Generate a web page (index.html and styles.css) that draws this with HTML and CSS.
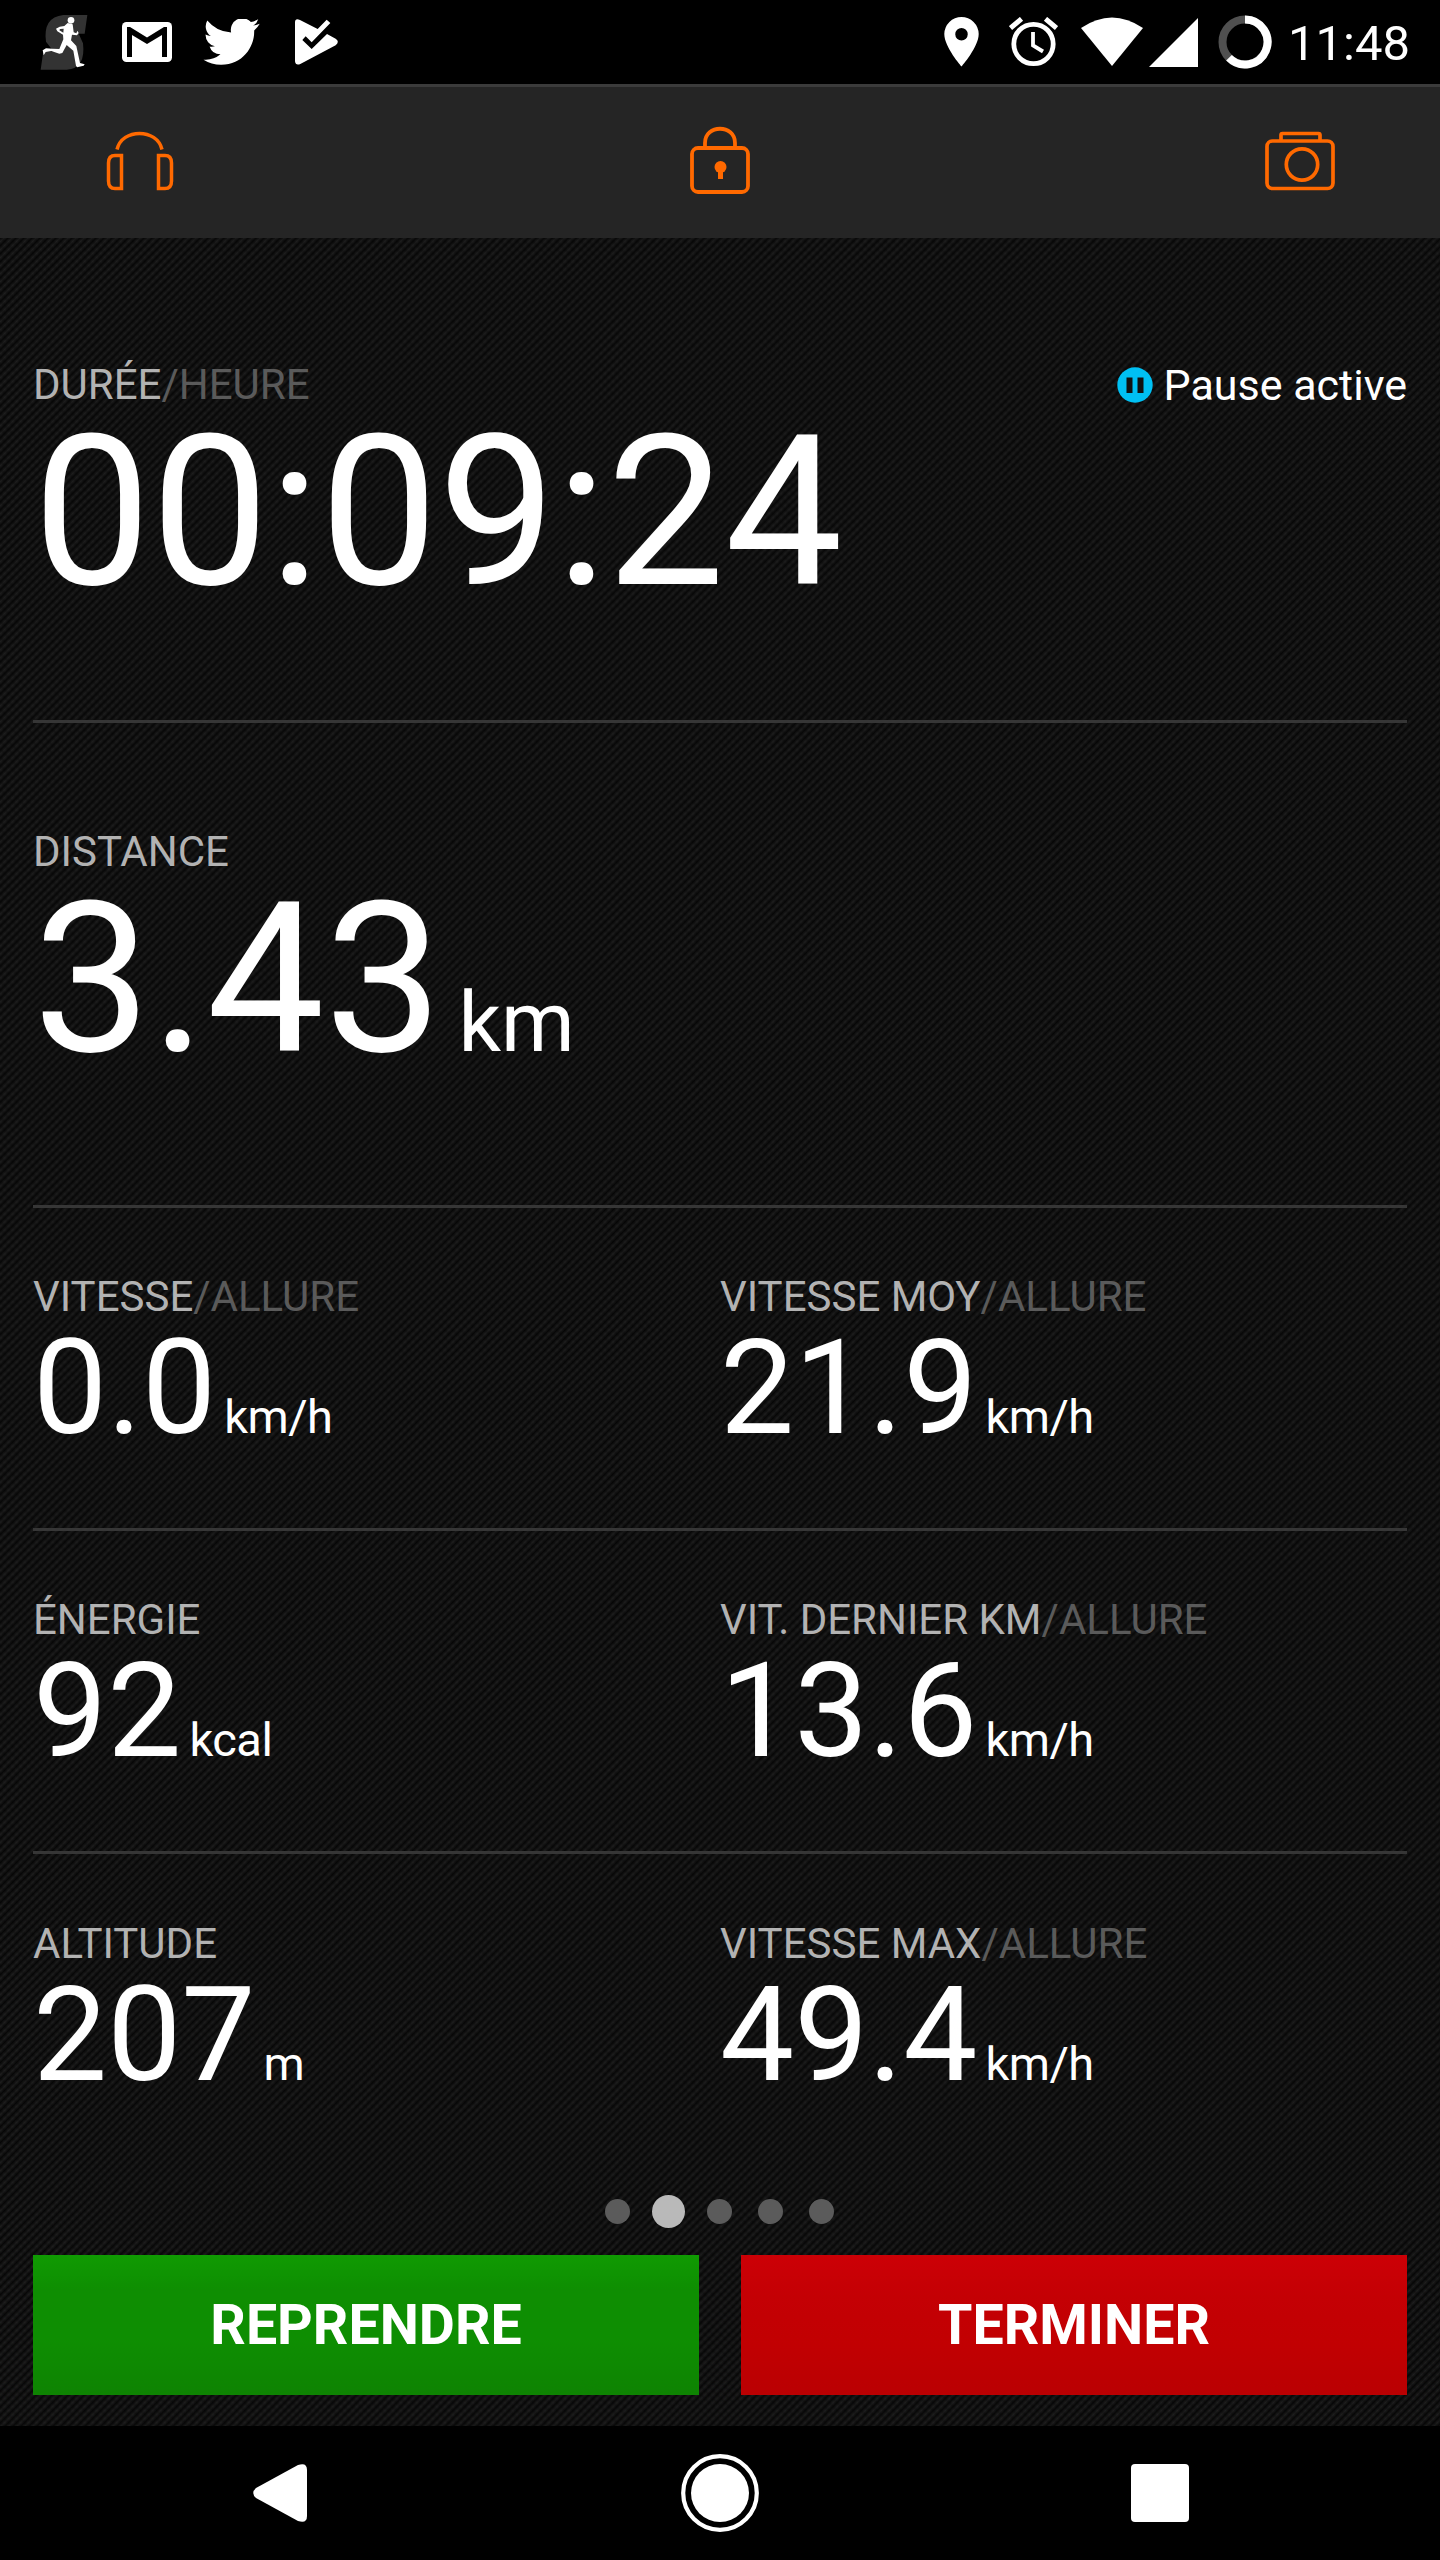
FILE: index.html
```html
<!DOCTYPE html>
<html lang="fr">
<head>
    <meta charset="UTF-8">
    <meta name="viewport" content="width=device-width, initial-scale=1.0">
    <title>Suivi de séance</title>
    <link rel="stylesheet" href="styles.css">
</head>
<body>

    <header class="status-bar">
        <div class="notifications">
            <svg class="runner" width="48" height="56" viewBox="120 42 144 168">
                <path fill="#333" d="M190 45H262L254 101H236L249 130Q258 206 200 209H122L130 154H160L138 125Q128 52 190 45Z"/>
                <circle cx="213" cy="61" r="10" fill="#fff"/>
                <path fill="#fff" d="M203 69L218 73L221 97L229 100L232 92L236 99L231 106L216 104L213 121L229 138L240 189L254 193L251 197L231 202L228 197L220 152L200 135L187 159L178 161L154 153L137 156L131 166L128 151L138 145L157 146L178 147L190 118L189 104L172 94L168 86L179 80L193 78ZM180 87L178 91L190 98L191 86Z"/>
            </svg>
            <svg class="mail" width="50" height="40" viewBox="0 0 50 40">
                <rect width="50" height="40" rx="4.500" fill="#fff"/>
                <path fill="#000" d="M5 5H8L25 15.500L42 5H45V35H40V13L25 22L10 13V35H5Z"/>
            </svg>
            <svg class="bird" width="57" height="47" viewBox="1 3 22.500 18.500" preserveAspectRatio="none">
                <path fill="#fff" d="M23.4 4.900a9 9 0 0 1-2.600.7 4.500 4.500 0 0 0 2-2.500 9 9 0 0 1-2.900 1.100A4.550 4.550 0 0 0 12.100 8.300 12.900 12.900 0 0 1 2.700 3.600a4.550 4.550 0 0 0 1.400 6.100 4.500 4.500 0 0 1-2.100-.6v.1a4.550 4.550 0 0 0 3.700 4.500 4.600 4.600 0 0 1-2.100.1 4.550 4.550 0 0 0 4.300 3.100A9.100 9.100 0 0 1 1.200 19a12.900 12.900 0 0 0 7 2c8.400 0 13-6.900 13-12.900v-.6a9.200 9.200 0 0 0 2.200-2.600z"/>
            </svg>
            <svg class="play" width="43" height="46" viewBox="885 57 129 138">
                <path fill="#fff" d="M885 66Q886 53 900 60L953 87L980 59L991 69L935 127L917 109L907 120L935 147L981 102L1007 116Q1020 125 1007 136L901 192Q887 198 885 184Z"/>
            </svg>
        </div>
        <div class="indicators">
            <svg class="pin" width="35" height="50" viewBox="0 0 35 50">
                <path fill="#fff" fill-rule="evenodd" d="M17.500 0A17.200 17.200 0 0 0 .3 17C.3 30 17.500 49.500 17.500 49.500S34.700 30 34.700 17A17.200 17.200 0 0 0 17.500 0ZM17.500 11A6.200 6.200 0 1 1 17.500 23.500A6.200 6.200 0 1 1 17.500 11Z"/>
            </svg>
            <svg class="alarm" width="49" height="50" viewBox="0 0 49 50">
                <circle cx="24.500" cy="27" r="19.700" fill="none" stroke="#fff" stroke-width="4.800"/>
                <path d="M1.500 11L12.500 1.800M36.500 1.800L47.500 11" stroke="#fff" stroke-width="5"/>
                <path d="M24 15V28.500L34 34.500" fill="none" stroke="#fff" stroke-width="3.800"/>
            </svg>
            <svg class="wifi" width="62" height="50" viewBox="0 0 62 50">
                <path fill="#fff" d="M0 11Q31 -10 62 11L31 49Z"/>
            </svg>
            <svg class="signal" width="49" height="49" viewBox="0 0 49 49">
                <path fill="#fff" d="M49 0V49H0Z"/>
            </svg>
            <svg class="battery" width="54" height="54" viewBox="0 0 54 54">
                <circle cx="27" cy="27" r="22.500" fill="none" stroke="#505050" stroke-width="8"/>
                <path d="M27 4.500A22.500 22.500 0 1 1 11 42.800" fill="none" stroke="#fff" stroke-width="8"/>
            </svg>
            <span class="clock">11:48</span>
        </div>
    </header>

    <nav class="toolbar">
        <svg width="70" height="70" viewBox="105 127 70 70">
            <g fill="none" stroke="#ff6900" stroke-width="3.500">
                <path d="M117 149.500C122 128 157 128 162 149.500"/>
                <path d="M121.500 155.500V188.500H115Q108.500 188.500 108.500 181V163Q108.500 155.500 115 155.500Z"/>
                <path d="M158.500 155.500V188.500H165Q171.500 188.500 171.500 181V163Q171.500 155.500 165 155.500Z"/>
            </g>
        </svg>
        <svg width="70" height="70" viewBox="685 127 70 70">
            <g fill="none" stroke="#ff6900" stroke-width="3.800">
                <rect x="692" y="148" width="56" height="44" rx="6"/>
                <path d="M705 147V143C705 124 735 124 735 143V147"/>
            </g>
            <circle cx="720.500" cy="167" r="6" fill="#ff6900"/>
            <path d="M718 169H723V179H718Z" fill="#ff6900"/>
        </svg>
        <svg width="70" height="70" viewBox="1265 127 70 70">
            <g fill="none" stroke="#ff6900" stroke-width="3.700">
                <rect x="1267" y="141" width="66" height="47.500" rx="5.500"/>
                <path d="M1281 141V135Q1281 133.500 1282.500 133.500H1318.500Q1320 133.500 1320 135V141"/>
                <circle cx="1302" cy="164.500" r="15.700"/>
            </g>
        </svg>
    </nav>

    <main class="dashboard">
        <section class="panel panel-duration">
            <div class="metric metric-large">
                <h2>DURÉE<span>/HEURE</span></h2>
                <p>00:09:24</p>
            </div>
            <div class="pause">
                <svg width="36" height="36" viewBox="0 0 36 36">
                    <circle cx="18" cy="18" r="17.700" fill="#00c0f3"/>
                    <path d="M9.500 10.500h6v15.500h-6zM20.500 10.500h6v15.500h-6z" fill="#111"/>
                </svg>
                Pause active
            </div>
        </section>

        <section class="panel panel-distance">
            <div class="metric metric-large">
                <h2>DISTANCE</h2>
                <p>3.43<small>km</small></p>
            </div>
        </section>

        <section class="panel">
            <div class="metric">
                <h2>VITESSE<span>/ALLURE</span></h2>
                <p>0.0<small>km/h</small></p>
            </div>
            <div class="metric">
                <h2>VITESSE MOY<span>/ALLURE</span></h2>
                <p>21.9<small>km/h</small></p>
            </div>
        </section>

        <section class="panel">
            <div class="metric">
                <h2>ÉNERGIE</h2>
                <p>92<small>kcal</small></p>
            </div>
            <div class="metric">
                <h2>VIT. DERNIER KM<span>/ALLURE</span></h2>
                <p>13.6<small>km/h</small></p>
            </div>
        </section>

        <section class="panel panel-last">
            <div class="metric">
                <h2>ALTITUDE</h2>
                <p>207<small>m</small></p>
            </div>
            <div class="metric">
                <h2>VITESSE MAX<span>/ALLURE</span></h2>
                <p>49.4<small>km/h</small></p>
            </div>
        </section>

        <div class="pager">
            <i></i>
            <i class="active"></i>
            <i></i>
            <i></i>
            <i></i>
        </div>

        <div class="actions">
            <button class="resume">REPRENDRE</button>
            <button class="finish">TERMINER</button>
        </div>
    </main>

    <footer class="nav-bar">
        <div>
            <svg width="54" height="58" viewBox="0 0 54 58">
                <path fill="#fff" d="M45 1Q54 -2 54 6V52Q54 60 45 57L3 34Q-2.500 29 3 24Z"/>
            </svg>
        </div>
        <div>
            <svg width="78" height="78" viewBox="0 0 78 78">
                <circle cx="39" cy="39" r="36.800" fill="none" stroke="#fff" stroke-width="4.200"/>
                <circle cx="39" cy="39" r="29" fill="#fff"/>
            </svg>
        </div>
        <div>
            <svg width="58" height="58" viewBox="0 0 58 58">
                <rect width="58" height="58" rx="4" fill="#fff"/>
            </svg>
        </div>
    </footer>

</body>
</html>
```
FILE: styles.css
```css
* {
    box-sizing: border-box;
}

body {
    font-family: Roboto, "Liberation Sans", sans-serif;
    margin: 0;
    background-color: #000;
    color: #fff;
}

svg {
    display: block;
    flex: none;
}

h2, p {
    margin: 0;
    font-weight: 400;
    white-space: nowrap;
}

.status-bar {
    display: flex;
    justify-content: space-between;
    height: 84px;
    padding: 0 30px 0 40px;
}

.notifications,
.indicators {
    display: flex;
    align-items: center;
}

.mail {
    margin-left: 34px;
}

.bird {
    margin-left: 31px;
}

.play {
    margin-left: 35px;
}

.alarm {
    margin-left: 30px;
}

.wifi {
    margin-left: 23px;
}

.signal {
    margin-left: 6px;
}

.battery {
    margin-left: 20px;
}

.clock {
    margin-left: 16px;
    font-size: 49px;
    line-height: 84px;
    padding-top: 4px;
}

.toolbar {
    display: flex;
    justify-content: space-between;
    align-items: center;
    height: 154px;
    padding: 0 105px 1px;
    border-top: 3px solid #3b3b3b;
    background-color: #252525;
}

.toolbar svg {
    overflow: visible;
}

/* woven carbon texture */
.dashboard {
    height: 2188px;
    padding: 0 33px;
    background-color: #101010;
    background-image:
        repeating-linear-gradient(45deg, rgba(0, 0, 0, 0) 0, rgba(0, 0, 0, 0.25) 2.83px, rgba(0, 0, 0, 0) 5.66px),
        repeating-linear-gradient(135deg, #080808 0, #1e1e1e 2.83px, #080808 5.66px);
}

.panel {
    display: flex;
    height: 323px;
    padding-top: 66px;
    border-bottom: 3px solid #363636;
}

.panel-duration {
    justify-content: space-between;
    height: 485px;
    padding-top: 124px;
}

.panel-distance {
    height: 485px;
    padding-top: 106px;
}

.panel-last {
    padding-top: 67px;
    border-bottom: none;
}

.metric {
    width: 687px;
}

.metric h2 {
    font-size: 42px;
    line-height: 46px;
    color: #b2b2b2;
}

.metric h2 span {
    color: #5a5a5a;
}

.metric p {
    font-size: 132px;
    line-height: 136px;
}

.metric p small {
    font-size: 47px;
    letter-spacing: -0.5px;
    margin-left: 8px;
}

.metric-large p {
    font-size: 210px;
    line-height: 208px;
}

.metric-large p small {
    font-size: 84px;
    letter-spacing: 0;
    margin-left: 16px;
}

.pause {
    display: flex;
    align-items: center;
    gap: 11px;
    height: 45px;
    font-size: 43px;
}

.pager {
    display: flex;
    justify-content: center;
    align-items: center;
    gap: 26px;
    height: 68px;
    margin-right: 1px;
}

.pager i {
    width: 25px;
    height: 25px;
    border-radius: 50%;
    background-color: #5b5b5b;
}

.pager .active {
    width: 33px;
    height: 33px;
    margin: 0 -4px;
    background-color: #b9b9b9;
}

.actions {
    display: flex;
    gap: 42px;
    margin-top: 10px;
}

.actions button {
    flex: 1;
    height: 140px;
    padding: 0;
    border: none;
    font-family: inherit;
    font-size: 55.5px;
    font-weight: 700;
    color: #fff;
}

.actions .resume {
    background: linear-gradient(#109a02, #0e8e02 25%, #0e8e02 60%, #0e8302);
}

.actions .finish {
    background: linear-gradient(#cc0006, #c40004 30%, #c20002 60%, #ba0002);
}

.nav-bar {
    display: flex;
    height: 134px;
    padding: 0 60px;
}

.nav-bar div {
    flex: 1;
    display: flex;
    justify-content: center;
    align-items: center;
}
```
